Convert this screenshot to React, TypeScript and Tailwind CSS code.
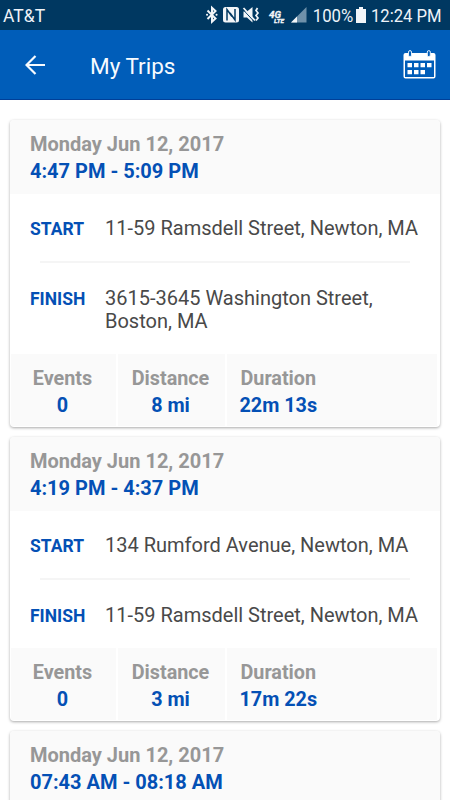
type Trip = { date: string; time: string; start: string; finish: string[]; distance: string; duration: string };
type Heading = { date: string; time: string };

const trips: Trip[] = [
  { date: "Monday Jun 12, 2017", time: "4:47 PM - 5:09 PM", start: "11-59 Ramsdell Street, Newton, MA", finish: ["3615-3645 Washington Street,", "Boston, MA"], distance: "8 mi", duration: "22m 13s" },
  { date: "Monday Jun 12, 2017", time: "4:19 PM - 4:37 PM", start: "134 Rumford Avenue, Newton, MA", finish: ["11-59 Ramsdell Street, Newton, MA"], distance: "3 mi", duration: "17m 22s" },
];

function StatusBar() {
  return (
    <div className="flex h-[30px] shrink-0 items-center justify-between bg-[#003861] pl-[3px] text-[18px] leading-[30px] text-[#eef3f8]">
      <span className="pt-px text-[17.5px]">AT&amp;T</span>
      <div className="flex items-center">
        <svg width="110" height="30" viewBox="200 0 110 30" fill="none" stroke="#f2f5f8">
          <path d="M207.500 10.500l8 8-3.500 3.200V7.800l3.500 3.200-8 8" strokeWidth="2" />
          <path d="M207 14.800h.1M216.500 14.800h.1" strokeWidth="2" strokeLinecap="round" />
          <rect x="223" y="7" width="16" height="15.500" rx="2.500" fill="#f2f5f8" stroke="none" />
          <path d="M227 20.500V9.500l5 7M235 9V20l-5-7" stroke="#003861" strokeWidth="1.500" />
          <path d="M243.500 11.500h3.500l5.500-4.500v15.500l-5.500-5H243.500z" fill="#f2f5f8" stroke="none" />
          <path d="M243.500 10l11 12" stroke="#003861" strokeWidth="1" />
          <path d="M243.500 8l11.500 12.500" strokeWidth="1.800" />
          <path d="M257.500 8l-1.500 2.500 2 2.500-2 2.500 2 2.500-2 2.500" strokeWidth="1.700" />
          <text x="269" y="17.500" fontSize="8.500" fontWeight="700" fontStyle="italic" fontFamily="Roboto, sans-serif" fill="#f2f5f8" stroke="#f2f5f8" strokeWidth=".3" textLength="12" lengthAdjust="spacingAndGlyphs">4G</text>
          <text x="274" y="22.800" fontSize="5.800" fontWeight="700" fontStyle="italic" fontFamily="Roboto, sans-serif" fill="#f2f5f8" stroke="#f2f5f8" strokeWidth=".3" textLength="10" lengthAdjust="spacingAndGlyphs">LTE</text>
          <path d="M291 22.500L306.500 7v15.500z" fill="#6f91aa" stroke="none" />
          <path d="M291 22.500l6-6v6z" fill="#f2f5f8" stroke="none" />
        </svg>
        <span className="w-[43px] origin-left scale-x-[.93] whitespace-nowrap pl-[3px] pt-px text-[18px]">100%</span>
        <svg width="10" height="16" viewBox="0 0 10 16" className="ml-[3px] mr-[5px]" fill="#f2f5f8"><path d="M3 0h4v2h3v14H0V2h3z" /></svg>
        <span className="w-[79px] origin-left scale-x-[.925] whitespace-nowrap pt-px text-[18px]">12:24 PM</span>
      </div>
    </div>
  );
}

function AppBar() {
  return (
    <header className="flex h-[70px] shrink-0 items-center border-b border-[#003f98] bg-[#005db9] pl-[25px] pr-[14px] text-[#f7fbff]">
      <svg width="20" height="20" viewBox="0 0 20 20" fill="none" stroke="currentColor" strokeWidth="2.2"><path d="M20 10H2M10.500 1L1.500 10l9 9" /></svg>
      <h1 className="ml-[45px] flex-1 pt-[2px] text-[22.5px] leading-[28px]">My Trips</h1>
      <svg width="33" height="30" viewBox="0 0 33 30">
        <path d="M2.500 3h28a2 2 0 0 1 2 2v21.500a2 2 0 0 1-2 2h-28a2 2 0 0 1-2-2V5a2 2 0 0 1 2-2z" fill="#fff" />
        <path d="M2 10.500h29v16.500h-29z" fill="#005db9" />
        <path d="M4.500 13h4.500v4.200H4.500zM11 13h4.500v4.200H11zM17.500 13h4.500v4.200h-4.500zM24 13h4.500v4.200H24zM4.500 20h4.500v4.200H4.500zM11 20h4.500v4.200H11zM17.500 20h4.500v4.200h-4.500z" fill="#fff" />
        <rect x="5.500" y=".600" width="3" height="6" rx="1.500" fill="#005db9" stroke="#e5f1fc" strokeWidth="1" />
        <rect x="24.300" y=".600" width="3" height="6" rx="1.500" fill="#005db9" stroke="#e5f1fc" strokeWidth="1" />
      </svg>
    </header>
  );
}

function Stat({ label, value }: { label: string; value: string }) {
  return (
    <div className="flex flex-col items-center bg-[#fafafa] pr-[2px] pt-[11px] text-[19.8px] leading-[27px]">
      <span className="text-[#979797]">{label}</span>
      <span className="text-[#0450b5]">{value}</span>
    </div>
  );
}

function Leg({ label, lines }: { label: string; lines: string[] }) {
  return (
    <div className="flex text-[20px] leading-[23.5px]">
      <span className="-mb-[2px] w-[75px] text-[17.5px] font-bold leading-[25px] text-[#0450b5]">{label}</span>
      <div className="whitespace-nowrap text-[#494949]">{lines.map((l) => <div key={l}>{l}</div>)}</div>
    </div>
  );
}

function CardHeading({ date, time }: Heading) {
  return (
    <div className="h-[74px] bg-[#fafafa] pl-[20px] pt-[11px] text-[20px] font-bold leading-[27px]">
      <div className="text-[#979797]">{date}</div>
      <div className="text-[#0450b5]">{time}</div>
    </div>
  );
}

function TripCard({ trip }: { trip: Trip }) {
  const tall = trip.finish.length > 1;
  return (
    <article className={`mx-[10px] shrink-0 overflow-hidden rounded-[4px] bg-white shadow-[0_1px_3px_rgba(0,0,0,0.34)] ${tall ? "h-[307px]" : "h-[284px]"}`}>
      <CardHeading date={trip.date} time={trip.time} />
      <div className={`pl-[20px] pt-[23px] ${tall ? "h-[160px]" : "h-[137px]"}`}>
        <Leg label="START" lines={[trip.start]} />
        <div className="mb-[24px] ml-[10px] mr-[30px] mt-[20px] h-[2px] bg-[#f5f5f5]" />
        <Leg label="FINISH" lines={trip.finish} />
      </div>
      <div className="ml-px mr-[3px] grid h-[72px] grid-cols-[105px_107px_1fr] gap-[2px] font-bold">
        <Stat label="Events" value="0" />
        <Stat label="Distance" value={trip.distance} />
        <div className="flex bg-[#fafafa] pl-[12.5px]"><Stat label="Duration" value={trip.duration} /></div>
      </div>
    </article>
  );
}

export default function App() {
  return (
    <div className="flex h-[800px] w-[450px] flex-col overflow-hidden bg-white font-['Roboto',sans-serif]">
      <StatusBar />
      <AppBar />
      <main className="flex flex-1 flex-col gap-[10px] overflow-hidden pt-[20px]">
        {trips.map((t) => <TripCard key={t.time} trip={t} />)}
        <article className="mx-[10px] shrink-0 overflow-hidden rounded-t-[4px] shadow-[0_1px_3px_rgba(0,0,0,0.34)]">
          <CardHeading date="Monday Jun 12, 2017" time="07:43 AM - 08:18 AM" />
        </article>
      </main>
    </div>
  );
}
